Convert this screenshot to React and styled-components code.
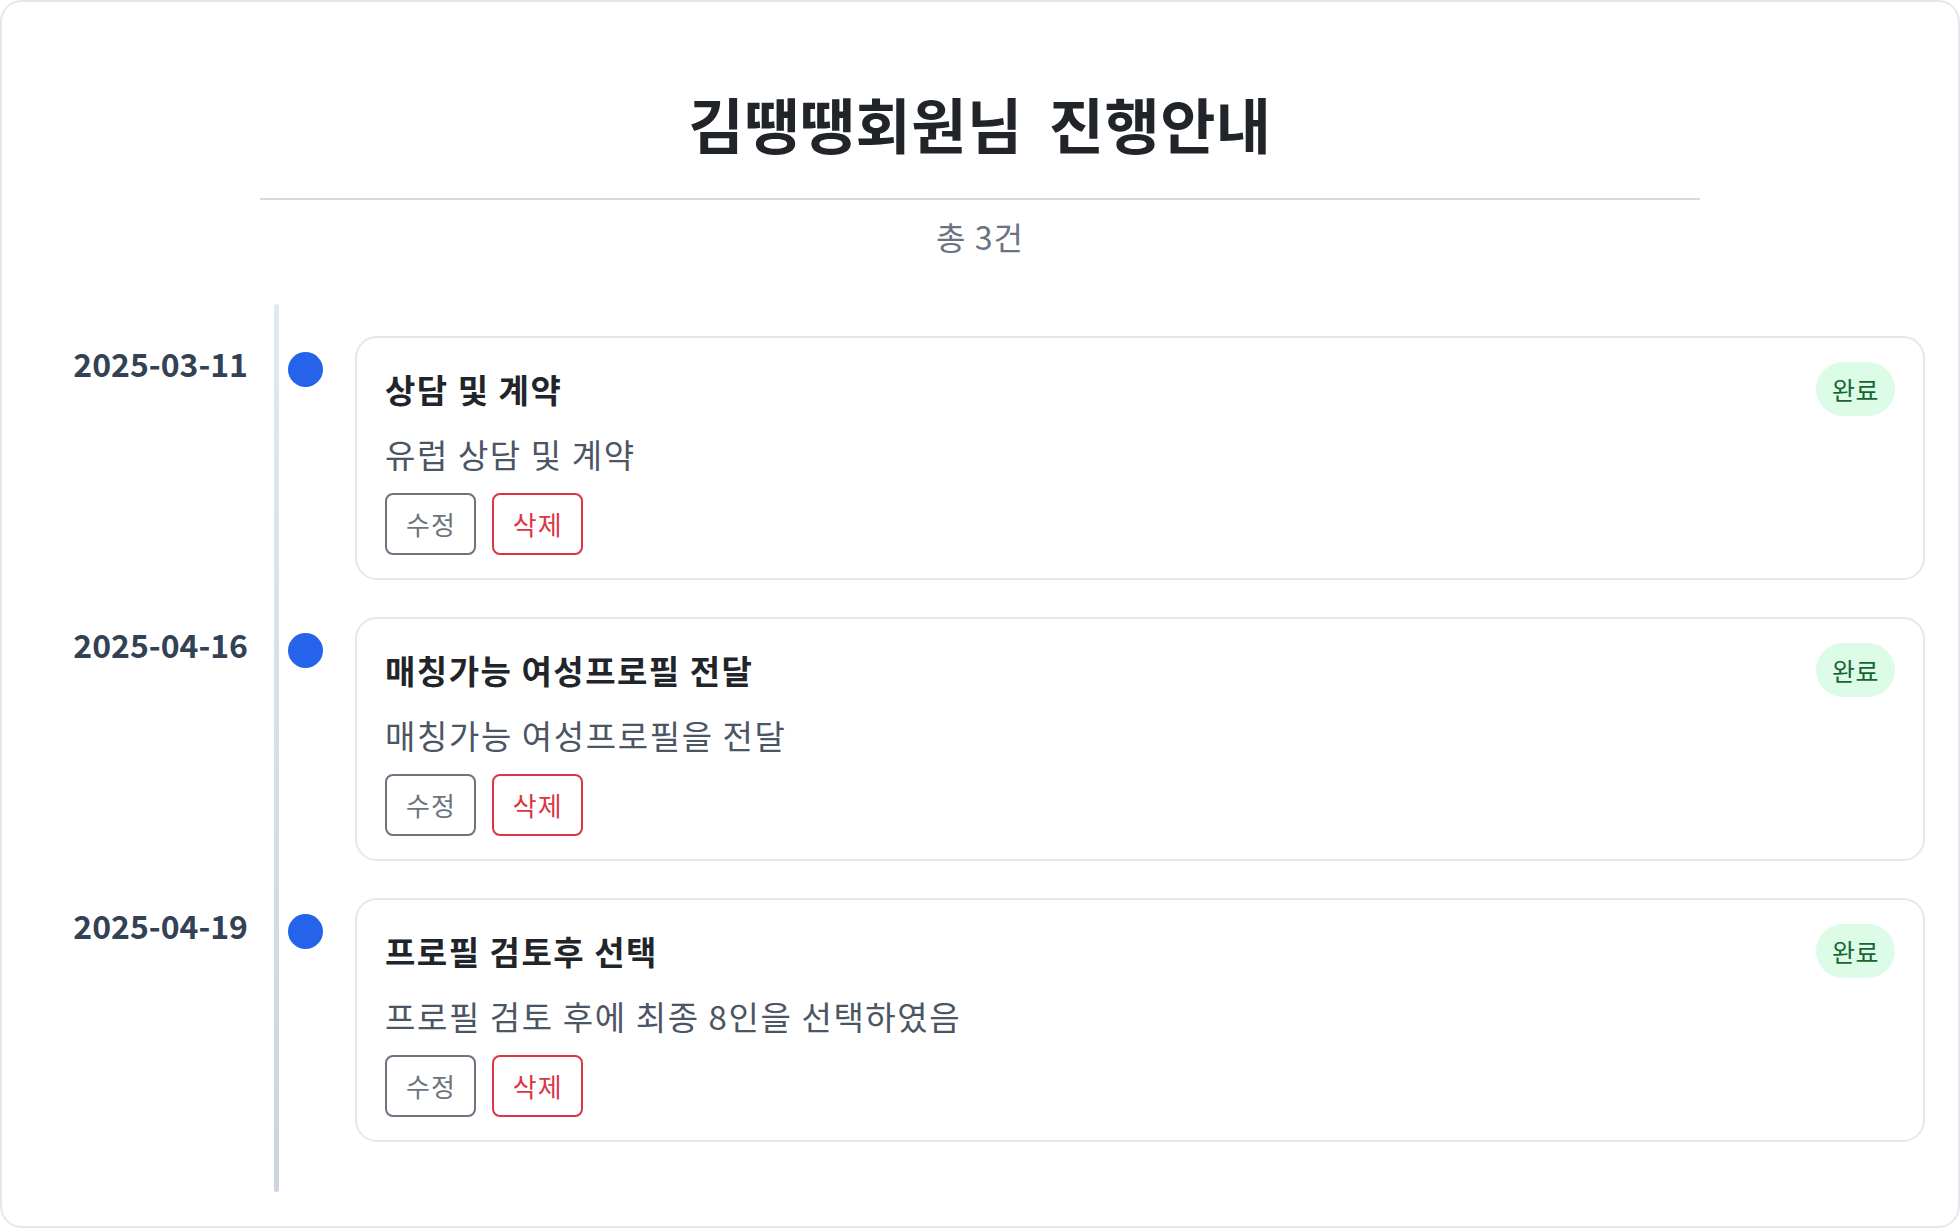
import React from "react";
import styled, { createGlobalStyle } from "styled-components";

const GlobalStyle = createGlobalStyle`
  html, body {
    margin: 0;
    padding: 0;
    background: #ffffff;
  }
  body {
    font-family: "Noto Sans CJK KR", "Noto Sans", sans-serif;
  }
  * { box-sizing: border-box; }
`;

const Page = styled.div`
  min-height: 100vh;
  border: 2px solid #e5e7eb;
  border-radius: 22px;
  background: #ffffff;
  padding: 85px 0 33px;
`;

const Header = styled.header`
  margin: 0 258px;
  text-align: center;
`;

const Title = styled.h1`
  margin: 0;
  padding-bottom: 39px;
  border-bottom: 2px solid #d9d9d9;
  font-size: 60px;
  line-height: 72px;
  font-weight: 700;
  color: #212529;
  word-spacing: 0.2em;
  letter-spacing: 0.5px;
`;

const Count = styled.p`
  margin: 12px 0 0;
  font-size: 32px;
  line-height: 48px;
  font-weight: 400;
  color: #6b7280;
  letter-spacing: 1px;
`;

const List = styled.ol`
  position: relative;
  list-style: none;
  margin: 44px 0 0;
  padding: 32px 33px 50px 40px;
  display: flex;
  flex-direction: column;
  gap: 37px;

  &::before {
    content: "";
    position: absolute;
    left: 272px;
    top: 0;
    bottom: 0;
    width: 5px;
    border-radius: 3px;
    background: linear-gradient(#e2e8f0, #cbd5e1);
  }
`;

const Item = styled.li`
  display: flex;
  align-items: flex-start;
`;

const DateLabel = styled.div`
  width: 206px;
  flex: none;
  text-align: right;
  padding-top: 5px;
  font-size: 32px;
  line-height: 44px;
  font-weight: 700;
  color: #334155;
`;

const Dot = styled.span`
  flex: none;
  width: 35px;
  height: 35px;
  margin: 16px 0 0 40px;
  border-radius: 50%;
  background: #2563eb;
  position: relative;
  z-index: 1;
`;

const Card = styled.article`
  flex: 1;
  margin-left: 32px;
  border: 2px solid #e5e7eb;
  border-radius: 22px;
  background: #ffffff;
  padding: 24px 28px 23px;
`;

const CardHead = styled.div`
  display: flex;
  align-items: center;
  justify-content: space-between;
  margin-bottom: 13px;
`;

const CardTitle = styled.h3`
  margin: 0;
  font-size: 33px;
  line-height: 44px;
  font-weight: 700;
  color: #212529;
  letter-spacing: 1.5px;
`;

const Badge = styled.span`
  display: inline-block;
  padding: 10px 16px;
  border-radius: 999px;
  background: #dcfce7;
  color: #166534;
  font-size: 25px;
  line-height: 34px;
  letter-spacing: 0.5px;
`;

const Desc = styled.p`
  margin: 0 0 14px;
  font-size: 33px;
  line-height: 50px;
  color: #4b5563;
  letter-spacing: 1.6px;
`;

const Actions = styled.div`
  display: flex;
  gap: 16px;
`;

const Button = styled.button`
  font-family: inherit;
  font-size: 26px;
  line-height: 38px;
  letter-spacing: 1px;
  padding: 10px 18px 10px 19px;
  background: #ffffff;
  border: 2px solid ${(p) => (p.$danger ? "#dc3545" : "#6c757d")};
  color: ${(p) => (p.$danger ? "#dc3545" : "#6c757d")};
  border-radius: 8px;
  cursor: pointer;
`;

const items = [
  { date: "2025-03-11", title: "상담 및 계약", desc: "유럽 상담 및 계약", status: "완료" },
  { date: "2025-04-16", title: "매칭가능 여성프로필 전달", desc: "매칭가능 여성프로필을 전달", status: "완료" },
  { date: "2025-04-19", title: "프로필 검토후 선택", desc: "프로필 검토 후에 최종 8인을 선택하였음", status: "완료" },
];

export default function App() {
  return (
    <>
      <GlobalStyle />
      <Page>
        <Header>
          <Title>김땡땡회원님 진행안내</Title>
          <Count>총 3건</Count>
        </Header>
        <List>
          {items.map((it) => (
            <Item key={it.date}>
              <DateLabel>{it.date}</DateLabel>
              <Dot />
              <Card>
                <CardHead>
                  <CardTitle>{it.title}</CardTitle>
                  <Badge>{it.status}</Badge>
                </CardHead>
                <Desc>{it.desc}</Desc>
                <Actions>
                  <Button>수정</Button>
                  <Button $danger>삭제</Button>
                </Actions>
              </Card>
            </Item>
          ))}
        </List>
      </Page>
    </>
  );
}
